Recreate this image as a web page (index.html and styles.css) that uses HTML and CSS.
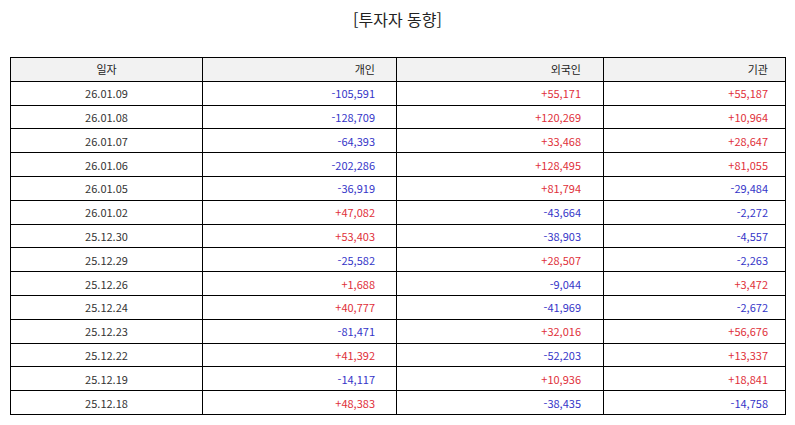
FILE: index.html
```html
<!DOCTYPE html>
<html lang="ko">
<head>
<meta charset="utf-8">
<title>투자자 동향</title>
<link rel="stylesheet" href="styles.css">
</head>
<body>
<div class="page">
  <h1 class="title">[투자자 동향]</h1>
  <table class="grid">
    <colgroup>
      <col class="c-date"><col class="c-ind"><col class="c-for"><col class="c-inst">
    </colgroup>
    <thead>
      <tr><th class="date">일자</th><th class="ind">개인</th><th class="for">외국인</th><th class="inst">기관</th></tr>
    </thead>
    <tbody>
      <tr><td class="date">26.01.09</td><td class="ind neg">-105,591</td><td class="for pos">+55,171</td><td class="inst pos">+55,187</td></tr>
      <tr><td class="date">26.01.08</td><td class="ind neg">-128,709</td><td class="for pos">+120,269</td><td class="inst pos">+10,964</td></tr>
      <tr><td class="date">26.01.07</td><td class="ind neg">-64,393</td><td class="for pos">+33,468</td><td class="inst pos">+28,647</td></tr>
      <tr><td class="date">26.01.06</td><td class="ind neg">-202,286</td><td class="for pos">+128,495</td><td class="inst pos">+81,055</td></tr>
      <tr><td class="date">26.01.05</td><td class="ind neg">-36,919</td><td class="for pos">+81,794</td><td class="inst neg">-29,484</td></tr>
      <tr><td class="date">26.01.02</td><td class="ind pos">+47,082</td><td class="for neg">-43,664</td><td class="inst neg">-2,272</td></tr>
      <tr><td class="date">25.12.30</td><td class="ind pos">+53,403</td><td class="for neg">-38,903</td><td class="inst neg">-4,557</td></tr>
      <tr><td class="date">25.12.29</td><td class="ind neg">-25,582</td><td class="for pos">+28,507</td><td class="inst neg">-2,263</td></tr>
      <tr><td class="date">25.12.26</td><td class="ind pos">+1,688</td><td class="for neg">-9,044</td><td class="inst pos">+3,472</td></tr>
      <tr><td class="date">25.12.24</td><td class="ind pos">+40,777</td><td class="for neg">-41,969</td><td class="inst neg">-2,672</td></tr>
      <tr><td class="date">25.12.23</td><td class="ind neg">-81,471</td><td class="for pos">+32,016</td><td class="inst pos">+56,676</td></tr>
      <tr><td class="date">25.12.22</td><td class="ind pos">+41,392</td><td class="for neg">-52,203</td><td class="inst pos">+13,337</td></tr>
      <tr><td class="date">25.12.19</td><td class="ind neg">-14,117</td><td class="for pos">+10,936</td><td class="inst pos">+18,841</td></tr>
      <tr><td class="date">25.12.18</td><td class="ind pos">+48,383</td><td class="for neg">-38,435</td><td class="inst neg">-14,758</td></tr>
    </tbody>
  </table>
</div>
</body>
</html>
```
FILE: styles.css
```css
html, body {
  margin: 0;
  padding: 0;
  background: #ffffff;
}
.page {
  padding: 0 10px 0 10px;
  font-family: "Noto Sans CJK KR", "Noto Sans", sans-serif;
  color: #333333;
}
.title {
  margin: 0;
  padding-top: 7px;
  height: 57px;
  box-sizing: border-box;
  text-align: center;
  font-size: 16px;
  font-weight: 400;
  line-height: 24px;
  color: #222222;
}
.grid {
  width: 775px;
  border-collapse: collapse;
  table-layout: fixed;
  font-size: 11px;
}
.c-date { width: 192px; }
.c-ind { width: 194px; }
.c-for { width: 207px; }
.c-inst { width: 182px; }
.grid th, .grid td {
  border: 1px solid #000000;
  height: 22.8px;
  padding: 0;
  line-height: 14px;
  font-weight: 400;
}
.grid th {
  background: #f2f2f2;
  color: #222222;
}
.date { text-align: center; }
.ind { text-align: right; padding-right: 21px !important; }
.for { text-align: right; padding-right: 22px !important; }
.inst { text-align: right; padding-right: 17px !important; }
.neg { color: #3535c8; }
.pos { color: #e0303a; }
```
